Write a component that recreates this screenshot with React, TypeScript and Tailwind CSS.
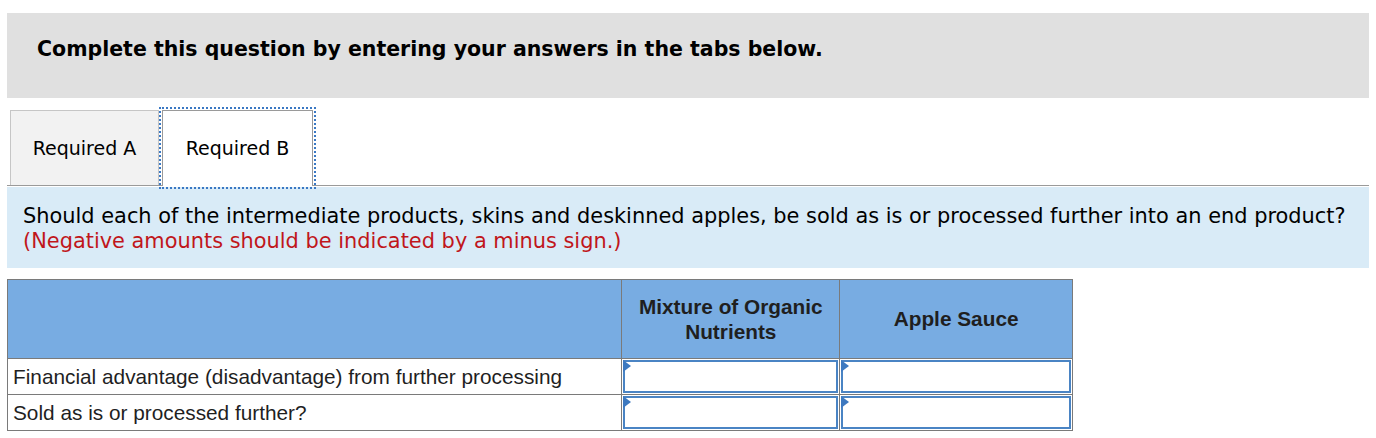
import React from "react";

const verdana = { fontFamily: '"DejaVu Sans", Verdana, sans-serif' };
const arial = { fontFamily: '"Liberation Sans", Arial, sans-serif' };

function InputCell() {
    return (
        <td className="border border-[#7a7a7a] p-[1px] h-full">
            <div className="relative h-[33px] border-2 border-[#4a84c4] bg-white">
                <span className="absolute -left-[2px] -top-[2px] w-0 h-0 border-y-[6px] border-y-transparent border-l-[8px] border-l-[#3d79c0]" />
            </div>
        </td>
    );
}

export default function App() {
    const rows = [
        "Financial advantage (disadvantage) from further processing",
        "Sold as is or processed further?",
    ];

    return (
        <div className="bg-white w-[1376px] h-[438px] px-[7px] pt-[13px] overflow-hidden">
            <div className="h-[85px] bg-[#e0e0e0] pl-[30px] pt-[24px]">
                <h2 className="text-[20.5px] leading-[24px] font-bold text-black" style={verdana}>
                    Complete this question by entering your answers in the tabs below.
                </h2>
            </div>

            <div className="mt-[12px] flex pl-[3px] border-b border-[#9a9a9a]">
                <div className="w-[149px] h-[75px] bg-[#f2f2f2] border border-b-0 border-[#c6c6c6] flex items-center justify-center text-[19px] text-black" style={verdana}>
                    Required A
                </div>
                <div className="w-[151px] h-[76px] -mb-px ml-[3px] bg-white border border-b-0 border-[#9a9a9a] outline-2 outline-dotted outline-[#3a78c3] outline-offset-[1px] flex items-center justify-center text-[19px] text-black" style={verdana}>
                    Required B
                </div>
            </div>

            <div className="mt-[1px] h-[81px] bg-[#d9ebf7] pl-[16px] pt-[17px] text-[20.9px] leading-[25px]" style={verdana}>
                <p className="text-black">
                    Should each of the intermediate products, skins and deskinned apples, be sold as is or processed further into an end product?
                </p>
                <p className="text-[#c0161b]">(Negative amounts should be indicated by a minus sign.)</p>
            </div>

            <table className="mt-[11px] w-[1066px] border-collapse text-[#1f1f1f]" style={arial}>
                <thead>
                    <tr className="h-[79px] bg-[#78ace2]">
                        <th className="w-[615px] border border-[#7a7a7a]" />
                        <th className="w-[218px] border border-[#7a7a7a] text-[20.8px] leading-[25px] font-bold">
                            Mixture of Organic
                            <br />
                            Nutrients
                        </th>
                        <th className="w-[233px] border border-[#7a7a7a] text-[20.8px] font-bold">Apple Sauce</th>
                    </tr>
                </thead>
                <tbody>
                    {rows.map((label) => (
                        <tr key={label} className="h-[36px]">
                            <td className="border border-[#7a7a7a] pl-[5px] text-[20.8px]">{label}</td>
                            <InputCell />
                            <InputCell />
                        </tr>
                    ))}
                </tbody>
            </table>
        </div>
    );
}
